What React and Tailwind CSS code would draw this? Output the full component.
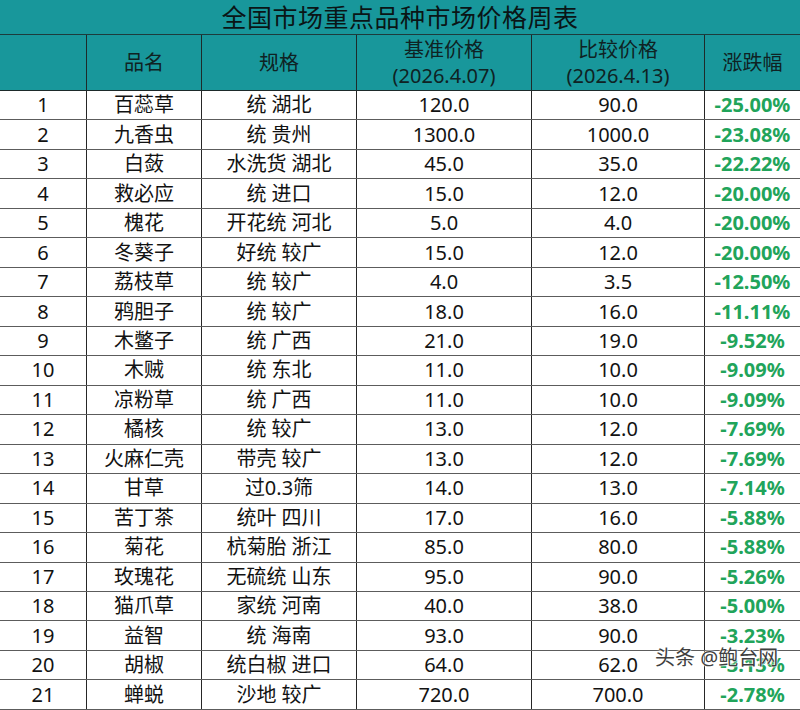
const rows = [
  ["1", "百蕊草", "统 湖北", "120.0", "90.0", "-25.00%"],
  ["2", "九香虫", "统 贵州", "1300.0", "1000.0", "-23.08%"],
  ["3", "白蔹", "水洗货 湖北", "45.0", "35.0", "-22.22%"],
  ["4", "救必应", "统 进口", "15.0", "12.0", "-20.00%"],
  ["5", "槐花", "开花统 河北", "5.0", "4.0", "-20.00%"],
  ["6", "冬葵子", "好统 较广", "15.0", "12.0", "-20.00%"],
  ["7", "荔枝草", "统 较广", "4.0", "3.5", "-12.50%"],
  ["8", "鸦胆子", "统 较广", "18.0", "16.0", "-11.11%"],
  ["9", "木鳖子", "统 广西", "21.0", "19.0", "-9.52%"],
  ["10", "木贼", "统 东北", "11.0", "10.0", "-9.09%"],
  ["11", "凉粉草", "统 广西", "11.0", "10.0", "-9.09%"],
  ["12", "橘核", "统 较广", "13.0", "12.0", "-7.69%"],
  ["13", "火麻仁壳", "带壳 较广", "13.0", "12.0", "-7.69%"],
  ["14", "甘草", "过0.3筛", "14.0", "13.0", "-7.14%"],
  ["15", "苦丁茶", "统叶 四川", "17.0", "16.0", "-5.88%"],
  ["16", "菊花", "杭菊胎 浙江", "85.0", "80.0", "-5.88%"],
  ["17", "玫瑰花", "无硫统 山东", "95.0", "90.0", "-5.26%"],
  ["18", "猫爪草", "家统 河南", "40.0", "38.0", "-5.00%"],
  ["19", "益智", "统 海南", "93.0", "90.0", "-3.23%"],
  ["20", "胡椒", "统白椒 进口", "64.0", "62.0", "-3.13%"],
  ["21", "蝉蜕", "沙地 较广", "720.0", "700.0", "-2.78%"],
]

const cols = "grid grid-cols-[87px_115px_155px_175px_173px_95px]"

function App() {
  return (
    <div className="relative w-[800px] h-[710px] overflow-hidden bg-white font-['Noto_Sans','Noto_Sans_CJK_SC',sans-serif] text-[20px] text-[#121212]">
      <div className="h-[35px] bg-[#18979b] border-b border-[#1d3b3c] flex items-center justify-center">
        <h1 className="text-[25px] leading-none text-[#0a1516] tracking-[0.5px]">全国市场重点品种市场价格周表</h1>
      </div>

      <div className={`${cols} h-[56px] bg-[#18979b] border-b border-[#1d2a2a] text-[#0f2223] leading-[26px]`}>
        <div className="border-r border-[#1d2a2a]"></div>
        <div className="border-r border-[#1d2a2a] flex items-center justify-center">品名</div>
        <div className="border-r border-[#1d2a2a] flex items-center justify-center">规格</div>
        <div className="border-r border-[#1d2a2a] flex flex-col items-center justify-center">
          <span>基准价格</span>
          <span>(2026.4.07)</span>
        </div>
        <div className="border-r border-[#1d2a2a] flex flex-col items-center justify-center">
          <span>比较价格</span>
          <span>(2026.4.13)</span>
        </div>
        <div className="flex items-center justify-center">涨跌幅</div>
      </div>

      <div className="h-[619px] flex flex-col">
        {rows.map((r) => (
          <div key={r[0]} className={`${cols} flex-1 min-h-0 leading-none border-b border-[#5c5c5c]`}>
            <div className="border-r border-[#262626] flex items-center justify-center">{r[0]}</div>
            <div className="border-r border-[#262626] flex items-center justify-center">{r[1]}</div>
            <div className="border-r border-[#262626] flex items-center justify-center">{r[2]}</div>
            <div className="border-r border-[#262626] flex items-center justify-center">{r[3]}</div>
            <div className="border-r border-[#262626] flex items-center justify-center">{r[4]}</div>
            <div className="flex items-center justify-center font-bold text-[#21a45a]">{r[5]}</div>
          </div>
        ))}
      </div>

      <div className="absolute left-[655px] top-[648px] text-[20px] leading-none text-[#3f3f3f] [text-shadow:0_0_2px_#fff,0_0_2px_#fff,0_0_1px_#fff]">
        头条 @鲍台网
      </div>
    </div>
  )
}

export default App
